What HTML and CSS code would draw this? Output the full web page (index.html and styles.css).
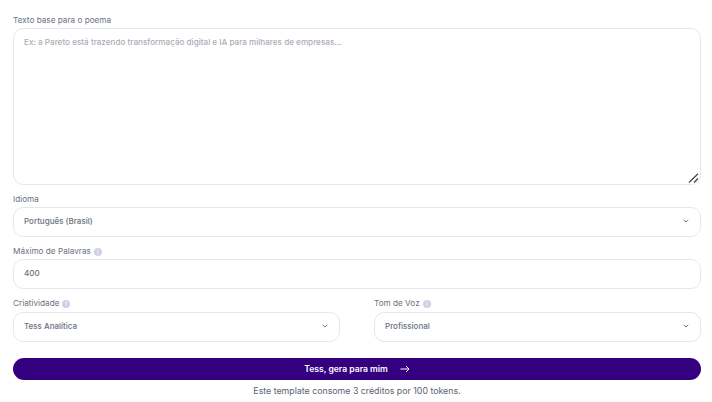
FILE: index.html
```html
<!DOCTYPE html>
<html lang="pt-BR">
<head>
  <meta charset="UTF-8" />
  <meta name="viewport" content="width=device-width, initial-scale=1.0"/>
  <title>Tess Template</title>
  <link rel="stylesheet" href="styles.css">
</head>
<body>

<form class="form">
  <div class="field">
    <label class="label">Texto base para o poema</label>
    <div class="textarea-wrap">
      <textarea class="textarea" placeholder="Ex: a Pareto está trazendo transformação digital e IA para milhares de empresas..."></textarea>
      <svg class="grip" viewBox="0 0 11 10"><path d="M1 9.5 10 .8M6 9.5 10 5.5"/></svg>
    </div>
  </div>

  <div class="field">
    <label class="label">Idioma</label>
    <div class="input">
      <span>Português (Brasil)</span>
      <svg class="chevron" viewBox="0 0 6 4"><path d="M.7.8 3 3.1 5.3.8"/></svg>
    </div>
  </div>

  <div class="field">
    <label class="label">Máximo de Palavras <span class="info">i</span></label>
    <div class="input"><span>400</span></div>
  </div>

  <div class="row">
    <div class="field">
      <label class="label">Criatividade <span class="info">i</span></label>
      <div class="input">
        <span>Tess Analítica</span>
        <svg class="chevron" viewBox="0 0 6 4"><path d="M.7.8 3 3.1 5.3.8"/></svg>
      </div>
    </div>
    <div class="field">
      <label class="label">Tom de Voz <span class="info">i</span></label>
      <div class="input">
        <span>Profissional</span>
        <svg class="chevron" viewBox="0 0 6 4"><path d="M.7.8 3 3.1 5.3.8"/></svg>
      </div>
    </div>
  </div>

  <button class="submit" type="button">
    Tess, gera para mim
    <svg class="arrow" viewBox="0 0 10 8"><path d="M.5 4H9M6 1 9 4 6 7"/></svg>
  </button>
  <p class="note">Este template consome 3 créditos por 100 tokens.</p>
</form>

</body>
</html>
```

FILE: styles.css
```css
* { margin: 0; padding: 0; box-sizing: border-box; }

body {
  font-family: 'Inter', sans-serif;
  background: #fff;
  color: #4b5563;
}

.form {
  padding: 16px 11px 0 13px;
  display: flex;
  flex-direction: column;
  gap: 10px;
}

.field {
  display: flex;
  flex-direction: column;
  gap: 3px;
}

.row .field {
  gap: 4px;
}

.label {
  display: flex;
  align-items: center;
  gap: 3px;
  height: 9px;
  font-size: 8.2px;
  line-height: 9px;
  color: #6b7280;
}

.info {
  width: 8px;
  height: 8px;
  border-radius: 50%;
  background: #cdd1e4;
  color: #fff;
  font-size: 6px;
  line-height: 8px;
  text-align: center;
}

.textarea-wrap {
  position: relative;
}

.textarea {
  display: block;
  width: 100%;
  height: 157px;
  padding: 8px 10px;
  border: 1px solid #e5e7eb;
  border-radius: 10px;
  outline: none;
  resize: none;
  font-family: inherit;
  font-size: 8.15px;
  font-weight: 500;
  line-height: 10px;
  color: #4b5563;
}

.textarea::placeholder {
  color: #a9adb8;
}

.grip {
  position: absolute;
  right: 2px;
  bottom: 2px;
  width: 11px;
  height: 10px;
  fill: none;
  stroke: #444;
  stroke-width: 1.2;
}

.input {
  display: flex;
  align-items: center;
  justify-content: space-between;
  height: 30px;
  padding: 0 11px 2px 10px;
  border: 1px solid #e5e7eb;
  border-radius: 10px;
  font-size: 8px;
  font-weight: 500;
  color: #6a7080;
}

.chevron {
  width: 6px;
  height: 4px;
  fill: none;
  stroke: #6b7280;
  stroke-width: 1;
}

.row {
  display: grid;
  grid-template-columns: 327px 327px;
  justify-content: space-between;
}

.submit {
  display: flex;
  align-items: center;
  justify-content: center;
  gap: 12px;
  height: 22px;
  margin-top: 6px;
  border: none;
  border-radius: 11px;
  background: #350080;
  color: #fff;
  font-family: inherit;
  font-size: 8.6px;
  font-weight: 600;
}

.arrow {
  width: 10px;
  height: 8px;
  fill: none;
  stroke: #fff;
  stroke-width: 1;
}

.note {
  margin-top: -5px;
  font-size: 8.8px;
  line-height: 11px;
  text-align: center;
  color: #5b6270;
}
```
